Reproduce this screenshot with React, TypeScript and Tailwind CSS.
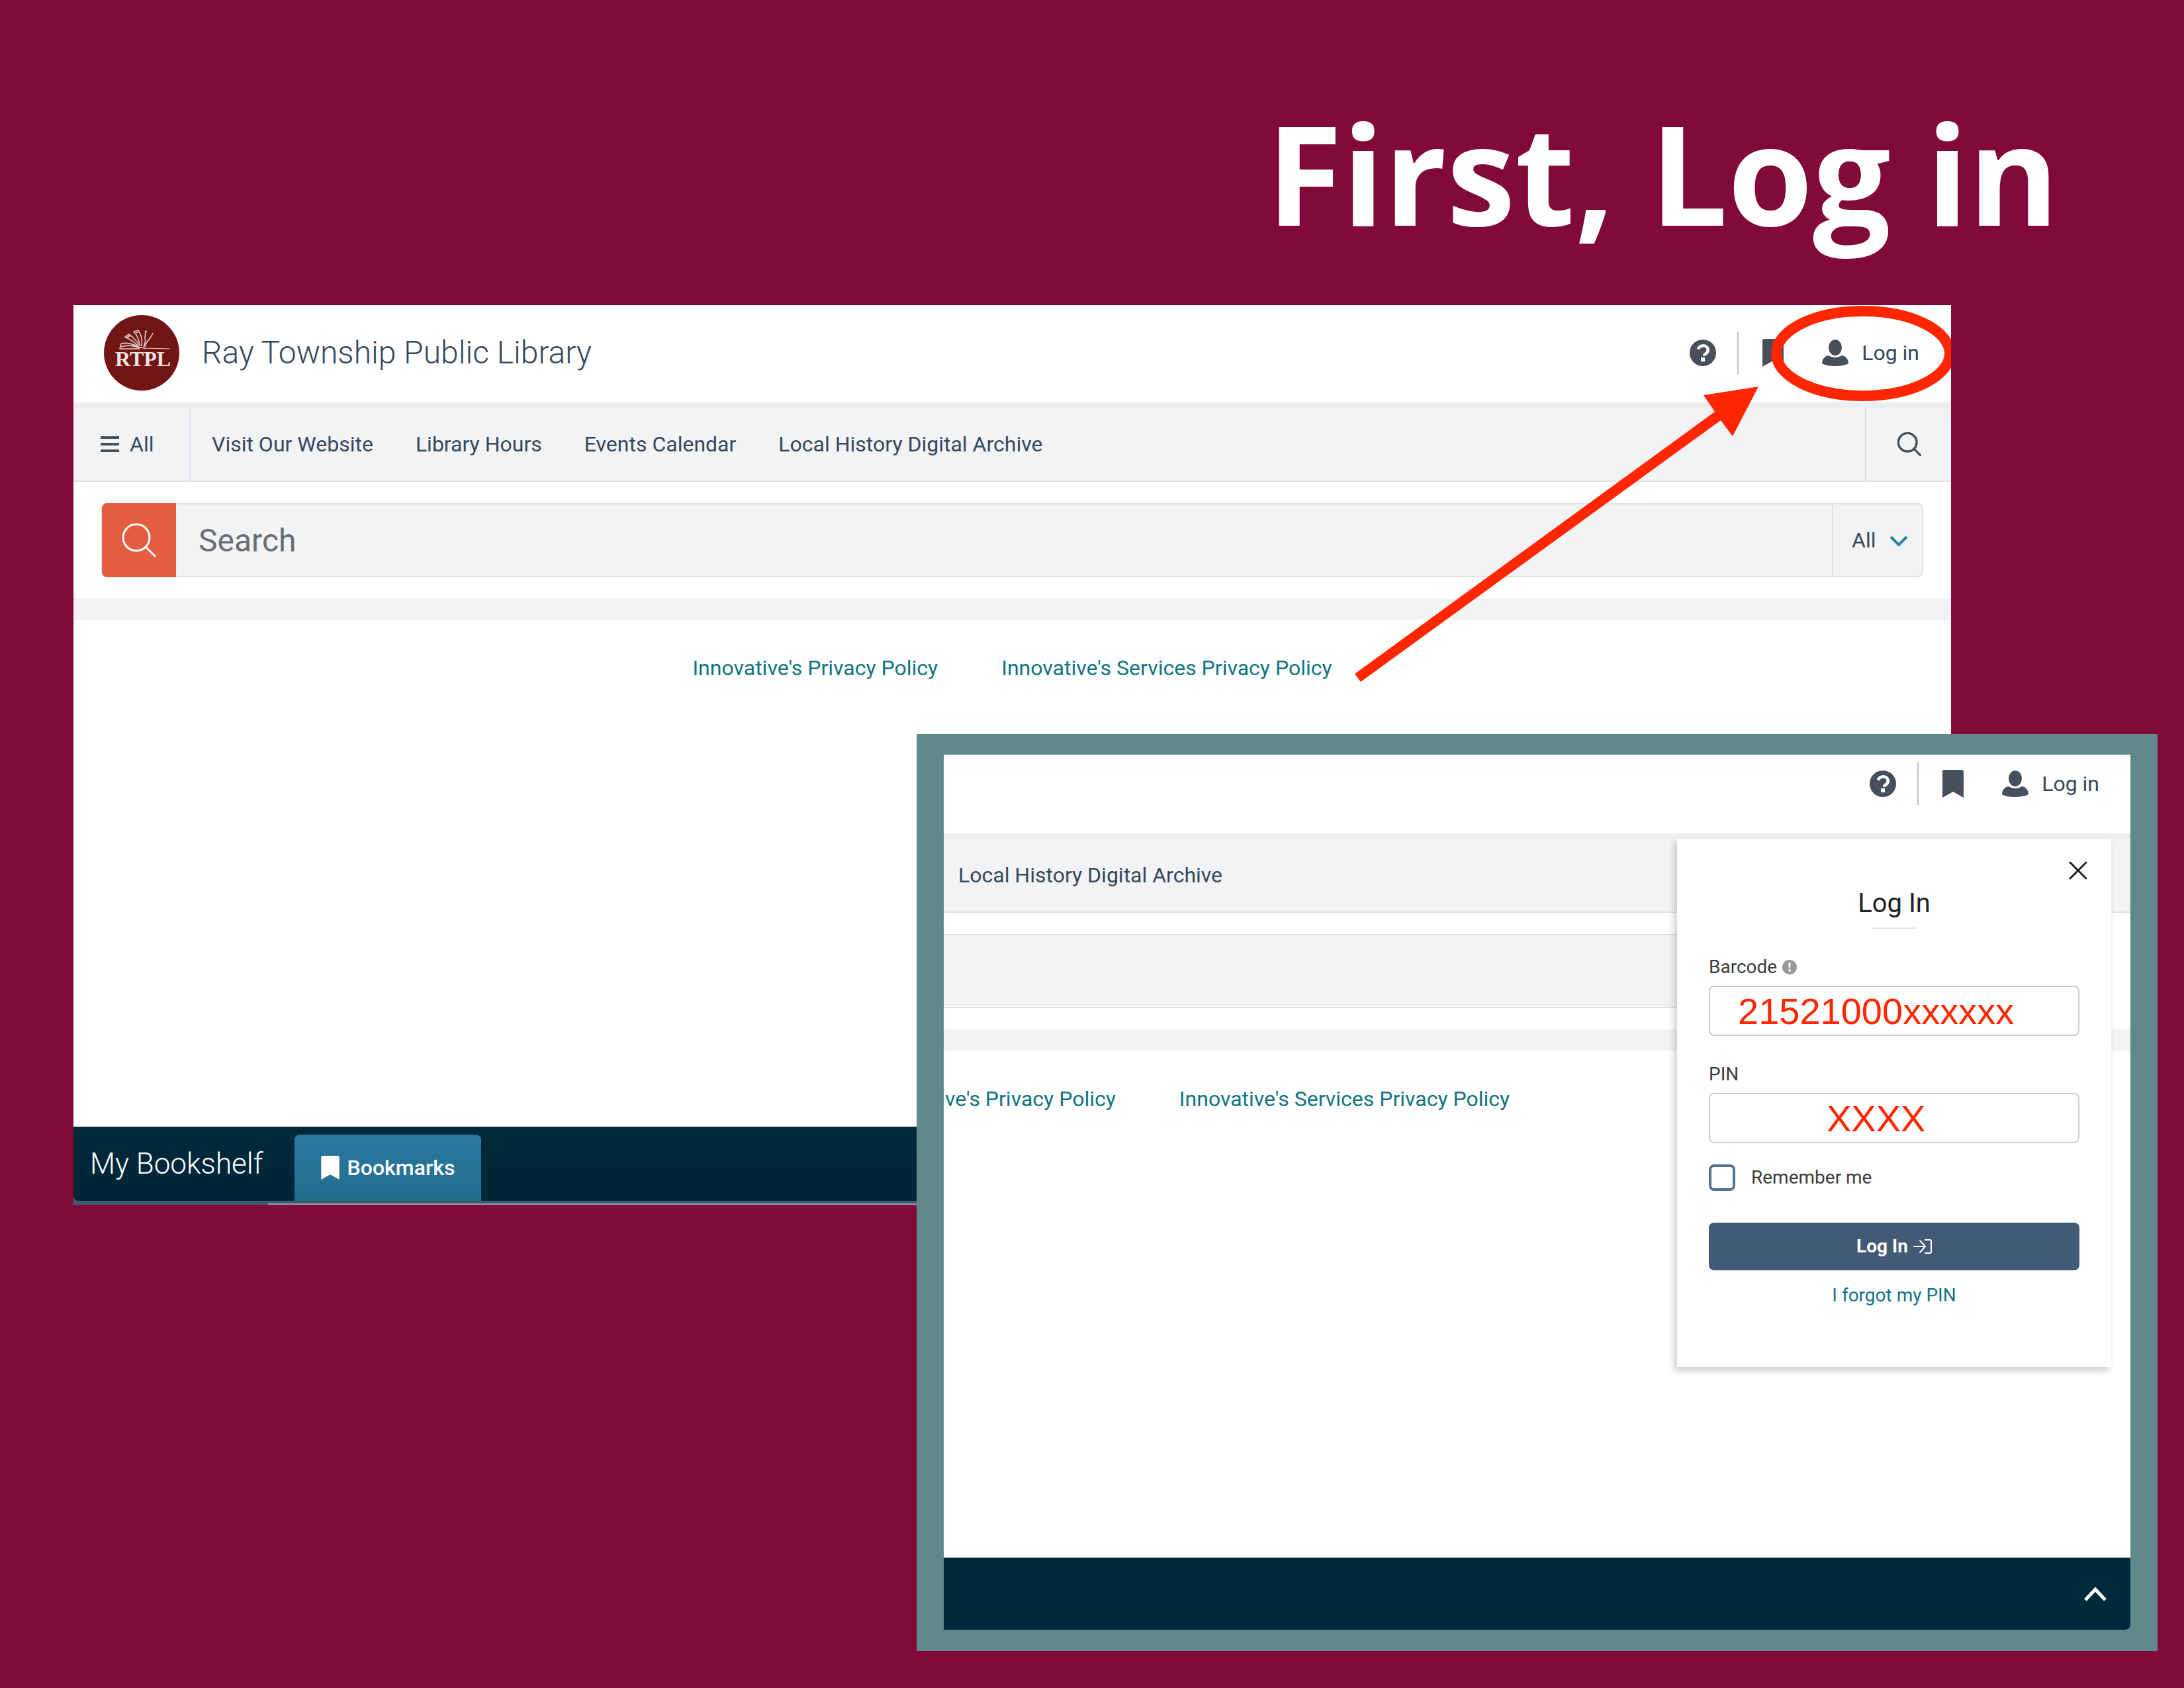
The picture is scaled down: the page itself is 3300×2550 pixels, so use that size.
import type { ReactNode } from "react";

const navLinks = ["Visit Our Website", "Library Hours", "Events Calendar", "Local History Digital Archive"];

function SearchIcon({ className, strokeWidth }: { className: string; strokeWidth: number }) {
  return (
    <svg viewBox="0 0 52 52" className={className} fill="none" stroke="currentColor" strokeWidth={strokeWidth} strokeLinecap="round">
      <circle cx="22" cy="22" r="20" />
      <path d="M37 37l13 13" />
    </svg>
  );
}

function HelpIcon() {
  return (
    <svg viewBox="0 0 40 40" className="size-10">
      <circle cx="20" cy="20" r="20" fill="currentColor" />
      <path d="M13 14.5c1.2-3.4 3.800-5.200 7.400-5.200 4.200 0 7.400 2.500 7.400 6.300 0 3.100-1.700 4.600-3.600 5.900-1.700 1.200-2 1.700-2 3.200" fill="none" stroke="#fff" strokeWidth="4.6" />
      <rect x="17" y="27" width="6" height="6" fill="#fff" />
    </svg>
  );
}

function BookmarkIcon({ className }: { className: string }) {
  return (
    <svg viewBox="0 0 32 42" className={className} fill="currentColor">
      <path d="M3 0h26a3 3 0 0 1 3 3v39L16 33 0 42V3a3 3 0 0 1 3-3z" />
    </svg>
  );
}

function UserIcon() {
  return (
    <svg viewBox="0 0 40 40" className="size-10" fill="currentColor">
      <ellipse cx="20" cy="12" rx="10" ry="12" />
      <path d="M9 24c2.500 0 4.500 3 11 3s8.500-3 11-3c5 1 9 6 9 12-5 3-12 4-20 4s-15-1-20-4c0-6 4-11 9-12z" />
    </svg>
  );
}

function Logo() {
  return (
    <svg viewBox="0 0 114 114" className="size-[114px]" role="img" aria-label="RTPL">
      <circle cx="57" cy="57" r="57" fill="#711515" />
      <g fill="none" stroke="#e3cccc" strokeWidth="1.6" strokeLinejoin="round">
        <path d="M61 50l39 1" strokeWidth="1" />
        <path d="M54 51H24l2-8c9-2 20 1 28 6M26 48c9-3 19-2 28 2M51 51q6-4 11 0" />
        <path d="M55 47C50 40 45 34 38 29l-6 4c8 4 15 8 20 14M34 34l5-2" />
        <path d="M57 47c1-9 0-17-5-24l-7 2c6 6 8 12 9 20M48 26l4 1" />
        <path d="M60 48c3-6 3-10 2-14l1-10 2 1M62 48c1-8 9-12 12-21" />
      </g>
      <text x="59" y="77" textAnchor="middle" fontSize="32" fontWeight="bold" fill="#f0e4e4" fontFamily="'Liberation Serif', serif">RTPL</text>
    </svg>
  );
}

function AccountBar({ children, className }: { children?: ReactNode; className: string }) {
  return (
    <header className={`flex items-center border-b-8 border-[#ebedef] bg-white text-[32px] text-[#34495e] ${className}`}>
      {children}
      <div className="ml-auto flex items-center text-[#474f5d]">
        <button type="button" aria-label="Help">
          <HelpIcon />
        </button>
        <span className="mr-9 ml-8 h-16 w-[2px] bg-[#c0c0c0]" />
        <button type="button" aria-label="Bookmarks">
          <BookmarkIcon className="h-[42px] w-8" />
        </button>
        <button type="button" className="ml-[58px] flex items-center gap-5">
          <UserIcon />
          <span className="leading-10 text-[#34495e]">Log in</span>
        </button>
      </div>
    </header>
  );
}

function PrivacyLinks({ className }: { className: string }) {
  return (
    <div className={`flex gap-24 pt-[53px] text-[32px] leading-10 whitespace-nowrap text-[#127482] ${className}`}>
      <a href="#privacy">Innovative's Privacy Policy</a>
      <a href="#services-privacy">Innovative's Services Privacy Policy</a>
    </div>
  );
}

function Arrow() {
  return (
    <svg viewBox="2040 461 908 580" className="pointer-events-none absolute top-0 right-0 h-[580px] w-[908px]" aria-hidden="true">
      <ellipse cx="2815" cy="534" rx="131" ry="64" fill="none" stroke="#ff2600" strokeWidth="16" />
      <path d="M2047 1018L2591 622L2574 597L2657 584L2618 659L2600 635L2056 1030z" fill="#ff2600" />
    </svg>
  );
}

function CatalogWindow() {
  return (
    <section className="relative mr-[352px] ml-[111px] flex flex-col overflow-hidden bg-white">
      <AccountBar className="h-[155px] pr-12 pb-1 pl-[46px]">
        <Logo />
        <h2 className="ml-[34px] text-5xl font-light">Ray Township Public Library</h2>
      </AccountBar>

      <nav className="flex h-28 items-stretch border-b-2 border-[#dfe1e4] bg-[#f2f3f5] text-[32px] text-[#34495e]">
        <button type="button" className="flex w-[177px] items-center gap-4 border-r-2 border-[#dfe1e4] pl-[41px]">
          <svg viewBox="0 0 28 24" className="h-6 w-7" fill="#474f5d">
            <path d="M0 0h28v4H0zM0 10h28v4H0zM0 20h28v4H0z" />
          </svg>
          All
        </button>
        <div className="flex items-center gap-16 pl-8">
          {navLinks.map((label) => (
            <a key={label} href="#nav">{label}</a>
          ))}
        </div>
        <button type="button" aria-label="Open search" className="ml-auto flex w-[130px] items-center border-l-2 border-[#dfe1e4] pl-[47px] text-[#474f5d]">
          <SearchIcon className="size-9" strokeWidth={5} />
        </button>
      </nav>

      <form className="mx-[42px] my-8 flex h-28 items-stretch rounded-lg border-2 border-[#dfe1e4] bg-[#f2f3f5]">
        <button type="button" aria-label="Search" className="-my-[2px] -ml-px flex w-28 items-center justify-center rounded-l-lg bg-[#e55d40] text-white">
          <SearchIcon className="size-[52px]" strokeWidth={3} />
        </button>
        <input type="text" aria-label="Search the catalog" placeholder="Search" className="min-w-0 flex-1 px-[34px] text-5xl placeholder:text-[#6a6d73]" />
        <div className="relative flex w-[136px] border-l-2 border-[#dfe1e4]">
          <select aria-label="Search scope" className="w-full appearance-none bg-transparent pl-7 text-[32px] text-[#34495e]">
            <option>All</option>
          </select>
          <svg viewBox="0 0 28 18" className="pointer-events-none absolute top-[46px] right-[21px] h-[18px] w-7" fill="none" stroke="#2a7fa5" strokeWidth="4">
            <path d="M2 3l12 12L26 3" />
          </svg>
        </div>
      </form>

      <div className="h-8 bg-[#f2f3f5]" />
      <PrivacyLinks className="h-[766px] justify-center" />

      <footer className="bg-[#425a69]">
        <div className="flex h-28 items-end rounded-bl-lg bg-linear-to-b from-[#00293c] to-[#002638] pl-[25px] text-white">
          <p className="flex h-28 w-[309px] items-center text-[44px] font-light">My Bookshelf</p>
          <button type="button" className="flex h-[100px] w-[282px] items-center justify-center gap-3 rounded-t-lg bg-linear-to-b from-[#297aa3] to-[#256c8c] text-[32px] font-medium">
            <BookmarkIcon className="h-9 w-7" />
            Bookmarks
          </button>
        </div>
        <div className="ml-[294px] h-[6px] border-b-2 border-[#8a9fb3]" />
      </footer>

      <Arrow />
    </section>
  );
}

function LoginPanel() {
  return (
    <form className="absolute top-[127px] right-[29px] flex h-[798px] w-[656px] flex-col bg-white px-12 text-[28px] leading-8 text-[#3c3c3c] shadow-[-4px_6px_10px_rgba(0,0,0,0.2)]">
      <button type="button" aria-label="Close" className="mt-[34px] -mr-3 self-end">
        <svg viewBox="0 0 28 28" className="size-7" fill="none" stroke="#222" strokeWidth="3" strokeLinecap="round">
          <path d="M2 2l24 24M26 2L2 26" />
        </svg>
      </button>
      <h2 className="mt-3 text-center text-[40px] leading-12 text-[#222]">Log In</h2>
      <div className="mt-3 h-[2px] w-[66px] self-center bg-[#e6e6e6]" />

      <label htmlFor="barcode" className="mt-[42px] flex items-center gap-2">
        Barcode
        <svg viewBox="0 0 22 22" className="size-[22px]">
          <circle cx="11" cy="11" r="11" fill="#999" />
          <path d="M9.300 4.500h3.400l-.6 8.300H9.900zM9.400 14.500h3.200v3.200H9.400z" fill="#fff" />
        </svg>
      </label>
      <input id="barcode" type="text" defaultValue="21521000xxxxxx" className="mt-3 h-[76px] rounded-lg border-2 border-[#ccc] pl-[42px] font-['Liberation_Sans',Arial,sans-serif] text-[56px] text-[#ff2600]" />

      <label htmlFor="pin" className="mt-[42px]">PIN</label>
      <input id="pin" type="text" defaultValue="XXXX" className="mt-3 h-[76px] rounded-lg border-2 border-[#ccc] pl-44 font-['Liberation_Sans',Arial,sans-serif] text-[56px] text-[#ff2600]" />

      <div className="mt-8 flex items-center gap-6">
        <input id="remember" type="checkbox" className="size-10 appearance-none rounded-lg border-4 border-[#557190]" />
        <label htmlFor="remember">Remember me</label>
      </div>

      <button type="button" className="mt-12 flex h-[72px] items-center justify-center gap-2 rounded-lg bg-[#425a75] font-bold text-white">
        Log In
        <svg viewBox="0 0 28 24" className="h-6 w-7" fill="none" stroke="currentColor" strokeWidth="2" strokeLinecap="round" strokeLinejoin="round">
          <path d="M1 12h17M10 3l8 9-8 9M18 2h7q2 0 2 2v16q0 2-2 2h-7" />
        </svg>
      </button>
      <a href="#forgot" className="mt-[22px] text-center text-[#127482]">I forgot my PIN</a>
    </form>
  );
}

function LoginWindow() {
  return (
    <section className="absolute top-[1109px] right-10 left-[1385px] bg-[#5f898a] px-[41px] pt-[31px] pb-8">
      <div className="relative flex flex-col overflow-hidden bg-white">
        <AccountBar className="h-[127px] pr-[47px] pb-8" />
        <nav className="flex h-28 items-center border-b-2 border-[#dfe1e4] bg-[#f2f3f5] pl-[22px] text-[32px] text-[#34495e]">
          <a href="#nav">Local History Digital Archive</a>
        </nav>
        <div className="my-8 mr-[42px] h-28 border-y-2 border-[#dfe1e4] bg-[#f2f3f5]" />
        <div className="h-8 bg-[#f2f3f5]" />
        <PrivacyLinks className="-ml-[111px] h-[766px]" />
        <footer className="bg-[#60798a]">
          <div className="flex h-[109px] items-center justify-end rounded-br-lg bg-[#00293c] pr-9">
            <button type="button" aria-label="Expand bookshelf">
              <svg viewBox="0 0 34 22" className="h-[22px] w-[34px]" fill="none" stroke="#fff" strokeWidth="5">
                <path d="M2 20L17 4l15 16" />
              </svg>
            </button>
          </div>
        </footer>
        <LoginPanel />
      </div>
    </section>
  );
}

export default function App() {
  return (
    <main className="relative min-h-screen bg-[#820a39] font-[Roboto,sans-serif]">
      <h1 className="h-[461px] pt-[157px] pr-[189px] text-right font-['Open_Sans',sans-serif] text-[208px] leading-none font-bold text-white">
        First, Log in
      </h1>
      <CatalogWindow />
      <LoginWindow />
    </main>
  );
}
